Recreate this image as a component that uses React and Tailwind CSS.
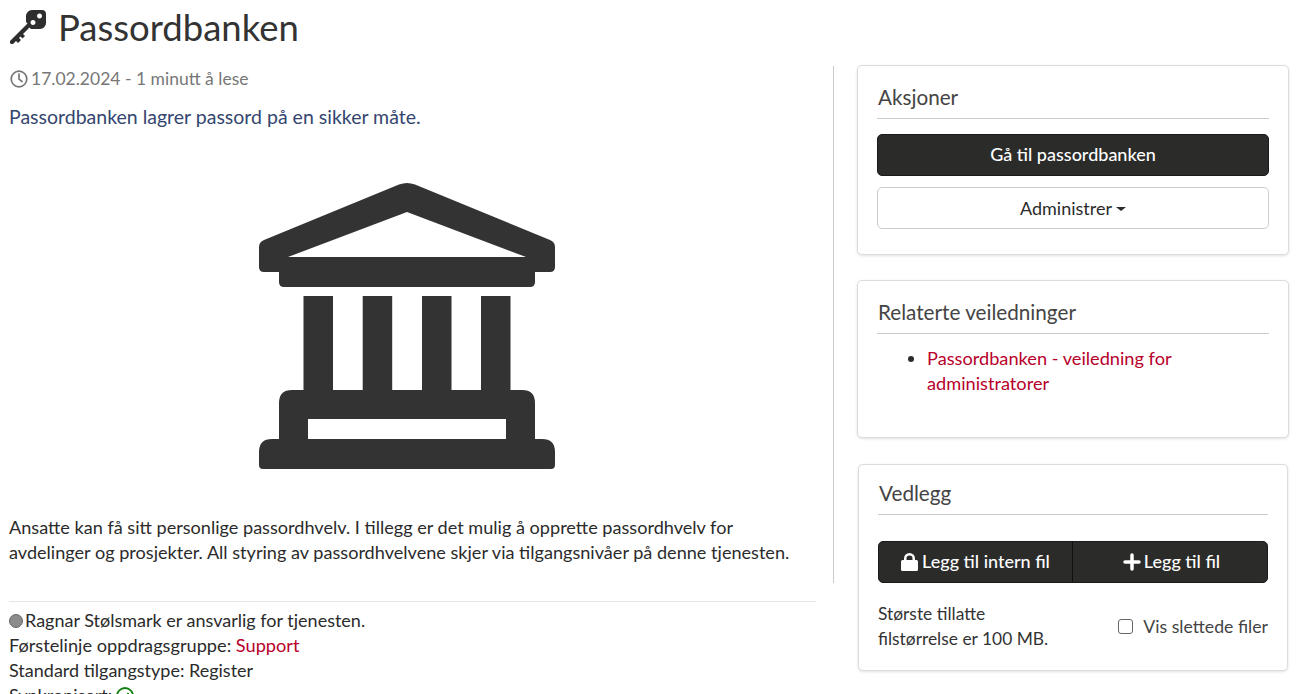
import { Plus } from 'lucide-react'

const FONT = "font-['Lato','Open_Sans',sans-serif]"

function KeyIcon() {
  return (
    <svg viewBox="0 0 36 36" className="w-9 h-9 shrink-0" fill="#2e2e2e">
      <path fillRule="evenodd" d="M16 6c0-3 3-6 6-6h10c2.500 0 4 1.500 4 4v9c0 3-3 6-6 6H21l-1.500-1.500-6.500 6.500 2 2-2.500 2.500-2-2-1.500 1.500 2 2-3 3-2-2-3 3H1l-1-1v-2l17.500-17.500L16 12zM29.500 3.500a2.500 2.500 0 1 0 .01 0zM23 10a2.500 2.500 0 1 0 .01 0z" />
    </svg>
  )
}

function ClockIcon() {
  return (
    <svg viewBox="0 0 18 18" className="w-[18px] h-[18px] shrink-0" fill="none" stroke="#777" strokeWidth="1.700" strokeLinecap="round">
      <circle cx="9" cy="9" r="7.800" />
      <path d="M9 4v5.200l3 2.300" />
    </svg>
  )
}

function LockIcon() {
  return (
    <svg viewBox="0 0 17 18" className="w-[17px] h-[18px] shrink-0" fill="white">
      <path fillRule="evenodd" d="M3 7V5.500a5.500 5.500 0 0 1 11 0V7h1.500Q17 7 17 8.500v8q0 1.500-1.500 1.500h-14Q0 18 0 16.500v-8Q0 7 1.500 7zM5.500 7h6V5.500a3 3 0 0 0-6 0z" />
    </svg>
  )
}

// tempel-ikonet midt i artikkelen
function BankIcon() {
  return (
    <svg viewBox="259 182 297 288" className="w-[297px] h-[288px]" fill="#333333">
      <path fillRule="evenodd" d="M264 240 399 184.500q8-3 16 0L550 240q5 2 5 7v20q0 5-5 5H535v10q0 5-5 5H284q-5 0-5-5V272H264q-5 0-5-5V247q0-5 5-7zM407 212 288 257H526z" />
      <rect x="303.500" y="296" width="29.500" height="96" />
      <rect x="362.700" y="296" width="29.500" height="96" />
      <rect x="422" y="296" width="29.500" height="96" />
      <rect x="481" y="296" width="29.500" height="96" />
      <path fillRule="evenodd" d="M292 390H522q13 0 13 13v36h7q13 0 13 13v13q0 4-4 4H263q-4 0-4-4v-13q0-13 13-13h7v-36q0-13 13-13zM308 419v20H506v-20z" />
    </svg>
  )
}

function Card({ title, className, children }) {
  return (
    <section className={`bg-white rounded-[5px] border border-[#dcdcdc] shadow-[0_1px_3px_rgba(0,0,0,0.12)] pl-[19px] pr-[19px] ${className}`}>
      <h2 className="text-[20.700px] leading-[26px] text-[#444] pl-[1px] pb-[8px] border-b border-[#cccccc]">{title}</h2>
      {children}
    </section>
  )
}

export default function App() {
  return (
    <div className={`${FONT} h-[694px] overflow-hidden bg-white text-[#2b2b2b] text-[18px] leading-[25px]`}>
      <header className="flex items-center gap-[12px] pl-[10px] h-[56px]">
        <KeyIcon />
        <h1 className="text-[36.500px] font-normal text-[#333] -mt-[2px]">Passordbanken</h1>
      </header>

      <div className="flex items-start pl-[9px] pt-[11px]">
        <div className="w-[807px] shrink-0">
          <div className="w-[825px] border-r border-[#cccccc] h-[517px]">
            <p className="flex items-center gap-[3px] text-[#777] text-[17.500px] pl-[1px] -mt-[1px]">
              <ClockIcon />
              <span>17.02.2024 - 1 minutt å lese</span>
            </p>
            <p className="text-[19.500px] leading-[26px] text-[#34466f] mt-[13px]">Passordbanken lagrer passord på en sikker måte.</p>
            <div className="flex justify-center w-[797px] mt-[52px]">
              <BankIcon />
            </div>
            <p className="w-[790px] mt-[45px] text-[18.100px]">
              Ansatte kan få sitt personlige passordhvelv. I tillegg er det mulig å opprette passordhvelv for avdelinger og prosjekter. All styring av passordhvelvene skjer via tilgangsnivåer på denne tjenesten.
            </p>
          </div>

          <div className="mt-[18px] pt-[6px] border-t border-[#e5e5e5]">
            <p className="flex items-center gap-[2px]">
              <span className="w-[14px] h-[14px] rounded-full bg-[#8c8c8c] border border-[#666] shrink-0" />
              Ragnar Stølsmark er ansvarlig for tjenesten.
            </p>
            <p className="text-[18.200px]">Førstelinje oppdragsgruppe: <a className="text-[#b8002a]">Support</a></p>
            <p>Standard tilgangstype: Register</p>
            <p className="flex items-center gap-[4px]">
              Synkronisert:
              <svg viewBox="0 0 18 18" className="w-[18px] h-[18px]" fill="none" stroke="#12800f" strokeWidth="1.800">
                <circle cx="9" cy="9" r="8" />
                <path d="M5.500 9.500 8 12l4.500-6" />
              </svg>
            </p>
          </div>
        </div>

        <aside className="ml-[41px] w-[432px] flex flex-col shrink-0 -mt-[2px]">
          <Card title="Aksjoner" className="pt-[18px] h-[190px]">
            <button className="mt-[15px] w-full h-[42px] pb-[1px] rounded-[5px] bg-[#2b2b2a] border border-[#1a1a1a] text-white font-medium">Gå til passordbanken</button>
            <button className="mt-[11px] w-full h-[42px] rounded-[5px] bg-white border border-[#cccccc] text-[#2b2b2b] flex items-center justify-center gap-[4px]">
              Administrer
              <span className="w-0 h-0 border-x-[5px] border-x-transparent border-t-[4px] border-t-[#2b2b2b] mt-[2px]" />
            </button>
          </Card>

          <Card title="Relaterte veiledninger" className="mt-[25px] pt-[18px] h-[158px]">
            <ul className="list-disc pl-[50px] pt-[12px]">
              <li className="marker:text-[#2b2b2b] text-[#b8002a] text-[18.200px]">Passordbanken - veiledning for administratorer</li>
            </ul>
          </Card>

          <Card title="Vedlegg" className="mt-[26px] ml-[1px] w-[430px] pt-[15px] h-[207px]">
            <div className="mt-[26px] flex h-[42px] rounded-[5px] bg-[#2b2b2a] border border-[#1a1a1a] text-white font-medium">
              <button className="w-[194px] pb-[1px] flex items-center justify-center gap-[4px] border-r border-[#111]">
                <LockIcon />
                Legg til intern fil
              </button>
              <button className="flex-1 pb-[1px] flex items-center justify-center gap-0">
                <Plus size={24} strokeWidth={3.500} />
                Legg til fil
              </button>
            </div>
            <div className="mt-[18px] flex items-center justify-between">
              <p className="text-[#333] text-[17.400px] w-[180px]">Største tillatte filstørrelse er 100 MB.</p>
              <label className="flex items-center gap-[10px] text-[#444] text-[17.700px]">
                <input type="checkbox" className="appearance-none w-[15px] h-[15px] rounded-[3px] border border-[#666] bg-white" />
                Vis slettede filer
              </label>
            </div>
          </Card>
        </aside>
      </div>
    </div>
  )
}
